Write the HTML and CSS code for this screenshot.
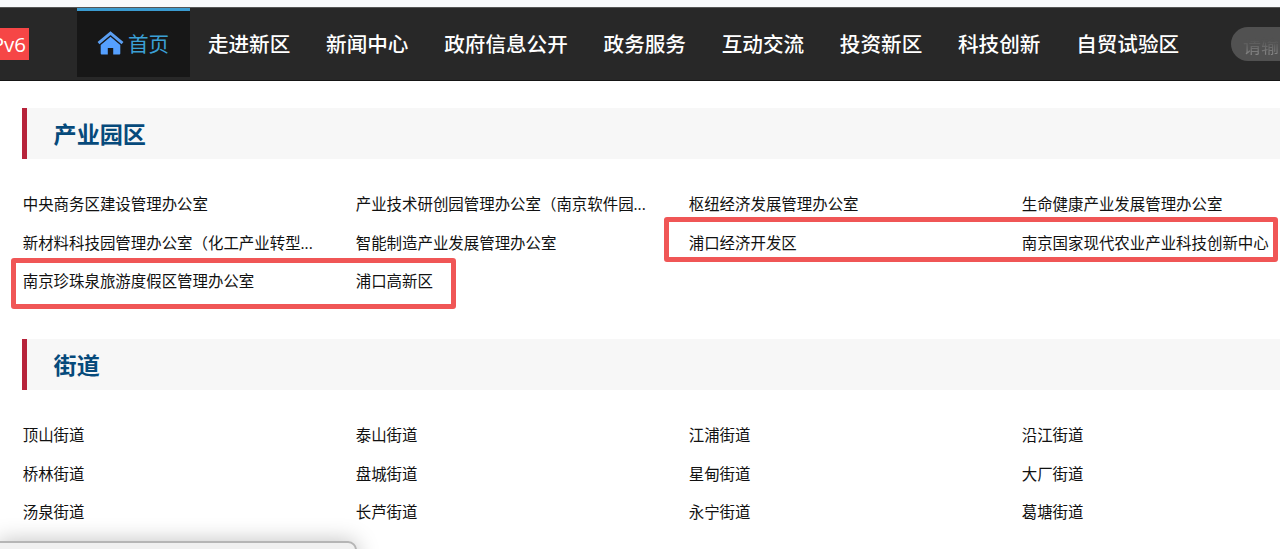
FILE: index.html
```html
<!DOCTYPE html>
<html lang="zh-CN">
<head>
    <meta charset="UTF-8">
    <meta name="viewport" content="width=device-width, initial-scale=1.0">
    <title>产业园区</title>
    <link rel="stylesheet" href="styles.css">
</head>
<body>
    <div class="header">
        <span class="ipv6">IPv6</span>
        <div class="nav">
            <a class="nav-item active">
                <svg class="home-icon" width="27" height="24" viewBox="0 0 27 24">
                    <path d="M1.5 12.2 L13.5 2.2 L25.5 12.2" fill="none" stroke="#5b9ff2" stroke-width="3"/>
                    <path d="M13.5 5.8 L23.3 14 V22.4 Q23.3 23.4 22.3 23.4 H16.2 V17 H10.8 V23.4 H4.7 Q3.7 23.4 3.7 22.4 V14 Z" fill="#55a0ff"/>
                </svg>
                首页
            </a>
            <a class="nav-item">走进新区</a>
            <a class="nav-item">新闻中心</a>
            <a class="nav-item">政府信息公开</a>
            <a class="nav-item">政务服务</a>
            <a class="nav-item">互动交流</a>
            <a class="nav-item">投资新区</a>
            <a class="nav-item">科技创新</a>
            <a class="nav-item">自贸试验区</a>
        </div>
        <div class="search"><span>请输入</span></div>
    </div>

    <div class="content">
        <h2 class="title">产业园区</h2>
        <ul class="list">
            <li>中央商务区建设管理办公室</li>
            <li>产业技术研创园管理办公室（南京软件园...</li>
            <li>枢纽经济发展管理办公室</li>
            <li>生命健康产业发展管理办公室</li>
            <li>新材料科技园管理办公室（化工产业转型...</li>
            <li>智能制造产业发展管理办公室</li>
            <li>浦口经济开发区</li>
            <li>南京国家现代农业产业科技创新中心</li>
            <li>南京珍珠泉旅游度假区管理办公室</li>
            <li>浦口高新区</li>
        </ul>
        <h2 class="title">街道</h2>
        <ul class="list">
            <li>顶山街道</li>
            <li>泰山街道</li>
            <li>江浦街道</li>
            <li>沿江街道</li>
            <li>桥林街道</li>
            <li>盘城街道</li>
            <li>星甸街道</li>
            <li>大厂街道</li>
            <li>汤泉街道</li>
            <li>长芦街道</li>
            <li>永宁街道</li>
            <li>葛塘街道</li>
        </ul>
    </div>

    <!-- Highlight boxes over the list -->
    <div class="mark mark-right"></div>
    <div class="mark mark-left"></div>
    <div class="status-bar"></div>
</body>
</html>
```

FILE: styles.css
```css
* {
    box-sizing: border-box;
}
html {
    overflow: hidden;
}
body {
    position: relative;
    margin: 0;
    height: 549px;
    overflow: hidden;
    background-color: #fff;
    border-top: 7px solid #f8f9fb;
    font-family: "Open Sans", "Noto Sans CJK SC", sans-serif;
    color: #111;
}
.header {
    display: flex;
    height: 74px;
    background-color: #282828;
    border-top: 1px solid #555;
    border-bottom: 1px solid #151515;
    overflow: hidden;
}
.ipv6 {
    display: flex;
    flex: none;
    justify-content: flex-end;
    align-items: center;
    width: 29px;
    height: 32px;
    margin-top: 20px;
    padding-right: 3px;
    background-color: #f64646;
    color: #fff;
    font-size: 20.5px;
    font-weight: 500;
}
.nav {
    display: flex;
    flex: none;
    margin-left: 48px;
}
.nav-item {
    display: flex;
    align-items: center;
    height: 69px;
    padding: 1px 17.9px 0;
    color: #fff;
    font-size: 20.6px;
    font-weight: 500;
    white-space: nowrap;
}
.nav-item.active {
    width: 113px;
    padding: 0 0 2px 20px;
    background-color: #171717;
    border-top: 3px solid #3a9bd0;
    color: #3ba0d6;
    font-weight: normal;
}
.home-icon {
    margin-right: 4px;
}
.search {
    flex: none;
    width: 49px;
    height: 34px;
    margin: 19px 0 0 34px;
    padding-left: 12px;
    border-radius: 17px 0 0 17px;
    background-color: #515151;
    font-size: 18px;
    line-height: 38px;
    white-space: nowrap;
    overflow: hidden;
}
.search span {
    background: linear-gradient(#515151 25%, #858585 85%);
    -webkit-background-clip: text;
    background-clip: text;
    color: transparent;
}
.content {
    padding: 27px 0 0 22px;
}
.title {
    height: 51px;
    margin: 0;
    padding-left: 26.6px;
    border-left: 5px solid #b7233a;
    background-color: #f7f7f7;
    color: #064a7b;
    font-size: 23.1px;
    font-weight: bold;
    line-height: 53px;
}
.list {
    display: grid;
    grid-template-columns: repeat(4, 333px);
    margin: 0;
    padding: 26px 0 38.5px 0.7px;
    list-style: none;
}
.list li {
    height: 38.6px;
    font-size: 15.45px;
    line-height: 38.6px;
    white-space: nowrap;
}
.mark {
    position: absolute;
    border: 5px solid #f05656;
    border-radius: 3px;
}
.mark-right {
    left: 664px;
    top: 210px;
    width: 614px;
    height: 45px;
}
.mark-left {
    left: 11px;
    top: 251px;
    width: 445px;
    height: 51px;
}
/* Browser link preview in the corner */
.status-bar {
    position: absolute;
    left: -2px;
    top: 534px;
    width: 359px;
    height: 30px;
    border: 2px solid #b5b5b5;
    border-radius: 0 9px 0 0;
    background-color: #f0f0f0;
    box-shadow: 0 0 22px rgba(0,0,0,0.25);
}
```
